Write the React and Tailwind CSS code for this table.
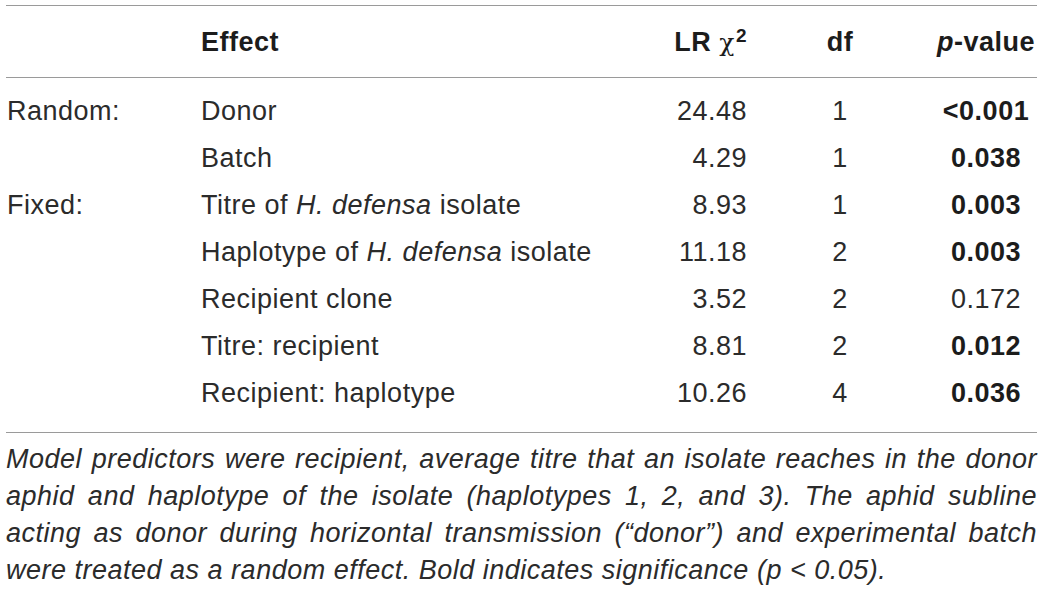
import React from 'react';

const rows = [
  { group: 'Random:', effect: 'Donor', lr: '24.48', df: '1', p: '<0.001', sig: true },
  { group: '', effect: 'Batch', lr: '4.29', df: '1', p: '0.038', sig: true },
  { group: 'Fixed:', effect: <>Titre of <i>H. defensa</i> isolate</>, lr: '8.93', df: '1', p: '0.003', sig: true },
  { group: '', effect: <>Haplotype of <i>H. defensa</i> isolate</>, lr: '11.18', df: '2', p: '0.003', sig: true },
  { group: '', effect: 'Recipient clone', lr: '3.52', df: '2', p: '0.172', sig: false },
  { group: '', effect: 'Titre: recipient', lr: '8.81', df: '2', p: '0.012', sig: true },
  { group: '', effect: 'Recipient: haplotype', lr: '10.26', df: '4', p: '0.036', sig: true },
];

// shared column template so header and body line up
const cols = 'grid grid-cols-[195px_440px_106px_186px_101px]';

const App = () => {
  return (
    <div className="w-[1043px] h-[592px] overflow-hidden bg-white px-[6px] pt-[5px] font-['Liberation_Sans',Arial,sans-serif] text-[27px] tracking-[0.5px] text-[#2b2b2b]">
      <div className="border-t border-[#9a9a9a]">
        <div className={`${cols} pt-[13px] pb-[11px] h-[71px] leading-[47px] font-bold text-[#1c1c1c]`}>
          <div></div>
          <div>Effect</div>
          <div className="text-right whitespace-nowrap">
            LR <span className="font-normal font-['DejaVu_Serif',serif] text-[25px] leading-none">χ</span>
            <span className="text-[19px] leading-none relative -top-[9px] ml-[1px]">2</span>
          </div>
          <div className="text-center">df</div>
          <div className="flex justify-center whitespace-nowrap pl-[5px]"><span><i>p</i>-value</span></div>
        </div>
      </div>

      <div className="border-t border-[#9a9a9a] pt-[10px] pb-[15px]">
        {rows.map((r, i) => (
          <div key={i} className={`${cols} h-[47px] leading-[47px]`}>
            <div className="pl-[1px]">{r.group}</div>
            <div className="whitespace-nowrap">{r.effect}</div>
            <div className="text-right">{r.lr}</div>
            <div className="text-center">{r.df}</div>
            <div className={`flex justify-center whitespace-nowrap pl-[5px] ${r.sig ? 'font-bold text-[#1c1c1c]' : ''}`}>
              <span>{r.p}</span>
            </div>
          </div>
        ))}
      </div>

      <div className="border-t border-[#9a9a9a] pt-[8px] italic leading-[37px] text-[#2b2b2b]">
        <span className="block [text-align-last:justify]">
          Model predictors were recipient, average titre that an isolate reaches in the donor
        </span>
        <span className="block [text-align-last:justify]">
          aphid and haplotype of the isolate (haplotypes 1, 2, and 3). The aphid subline
        </span>
        <span className="block [text-align-last:justify]">
          acting as donor during horizontal transmission (“donor”) and experimental batch
        </span>
        <span className="block">
          were treated as a random effect. Bold indicates significance (p &lt; 0.05).
        </span>
      </div>
    </div>
  );
};

export default App;
